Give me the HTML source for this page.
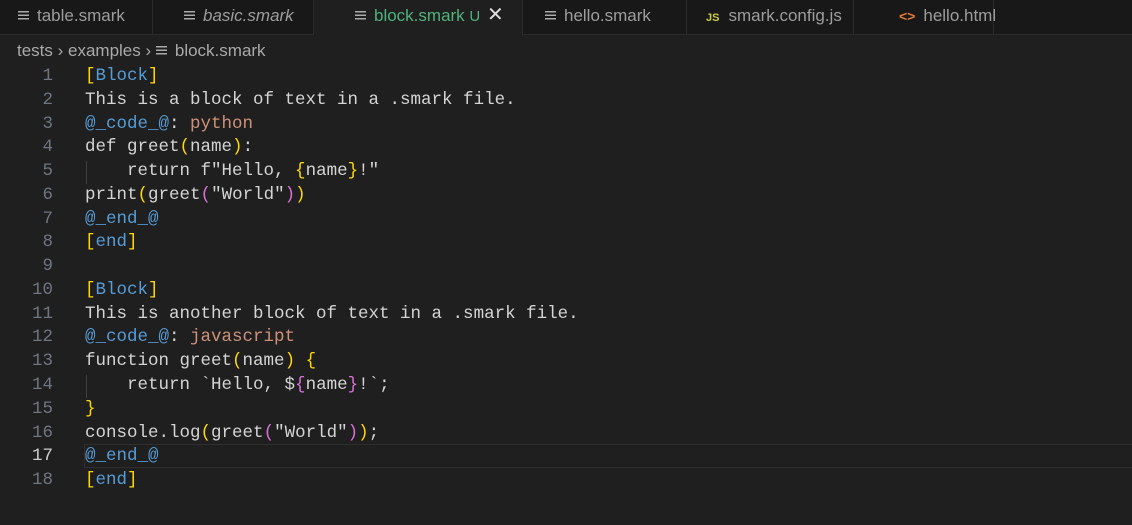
<!DOCTYPE html>
<html style="width:1132px;height:525px;overflow:hidden"><head><style>
*{margin:0;padding:0;box-sizing:border-box}
body{width:1132px;height:525px;background:#1f1f1f;overflow:hidden;font-family:"Liberation Sans",sans-serif;position:relative}
.tabs{position:absolute;left:0;top:0;width:1132px;height:35px;background:#181818;border-bottom:1px solid #2b2b2b}
.tab{position:absolute;top:0;height:35px;border-right:1px solid #2b2b2b;color:#9d9d9d;font-size:17px;line-height:31px;white-space:nowrap}
.tab.active{background:#1f1f1f;height:36px;color:#4fb37a}
.ic{display:inline-block;width:11px;height:10px;margin-right:8px;vertical-align:0px;background:linear-gradient(#aaa 0 1.5px,transparent 1.5px 3.5px,#aaa 3.5px 5px,transparent 5px 7px,#aaa 7px 8.5px,transparent 8.5px);}
.crumb{position:absolute;left:17px;top:40px;color:#a9a9a9;font-size:17px;line-height:22px}
.code{position:absolute;left:0;top:65px;font-family:"Liberation Mono",monospace;font-size:17.5px;line-height:23.77px;color:#d4d4d4;white-space:pre}
.ln{position:absolute;left:0;width:53px;text-align:right;color:#6e7681}
.tx{position:absolute;left:85px}
.b{color:#569cd6}.y{color:#ffd700}.p{color:#da70d6}.o{color:#ce9178}
.guide{position:absolute;left:86px;width:1px;height:23px;background:#404040}
</style></head><body>
<div class="tabs">
<div class="tab" style="left:0;width:153px;padding-left:18px"><span class="ic"></span>table.smark</div>
<div class="tab" style="left:153px;width:161px;padding-left:31px;font-style:italic"><span class="ic"></span>basic.smark</div>
<div class="tab active" style="left:314px;width:209px;padding-left:41px"><span class="ic"></span>block.smark <span style="font-size:15px">U</span> <span style="color:#ddd;font-size:20px;margin-left:2px">✕</span></div>
<div class="tab" style="left:523px;width:164px;padding-left:22px"><span class="ic"></span>hello.smark</div>
<div class="tab" style="left:687px;width:167px;padding-left:19px"><b style="color:#cbcb41;font-size:11px;margin-right:9px">JS</b>smark.config.js</div>
<div class="tab" style="left:854px;width:140px;padding-left:45px"><b style="color:#e37933;font-size:14px;margin-right:8px">&lt;&gt;</b>hello.html</div>
</div>
<div class="crumb">tests › examples › <span class="ic"></span>block.smark</div>
<div style="position:absolute;left:84px;top:444px;width:1048px;height:24px;border:1px solid #2e2e2e;border-right:none"></div>
<div class="code">
<div class="guide" style="top:96px"></div><div class="guide" style="top:310px"></div>
<div class="ln" style="top:0">1</div><div class="tx" style="top:0"><span class="y">[</span><span class="b">Block</span><span class="y">]</span></div>
<div class="ln" style="top:23.77px">2</div><div class="tx" style="top:23.77px">This is a block of text in a .smark file.</div>
<div class="ln" style="top:47.54px">3</div><div class="tx" style="top:47.54px"><span class="b">@_code_@</span>: <span class="o">python</span></div>
<div class="ln" style="top:71.31px">4</div><div class="tx" style="top:71.31px">def greet<span class="y">(</span>name<span class="y">)</span>:</div>
<div class="ln" style="top:95.08px">5</div><div class="tx" style="top:95.08px">    return f"Hello, <span class="y">{</span>name<span class="y">}</span>!"</div>
<div class="ln" style="top:118.85px">6</div><div class="tx" style="top:118.85px">print<span class="y">(</span>greet<span class="p">(</span>"World"<span class="p">)</span><span class="y">)</span></div>
<div class="ln" style="top:142.62px">7</div><div class="tx b" style="top:142.62px">@_end_@</div>
<div class="ln" style="top:166.39px">8</div><div class="tx" style="top:166.39px"><span class="y">[</span><span class="b">end</span><span class="y">]</span></div>
<div class="ln" style="top:190.16px">9</div>
<div class="ln" style="top:213.93px">10</div><div class="tx" style="top:213.93px"><span class="y">[</span><span class="b">Block</span><span class="y">]</span></div>
<div class="ln" style="top:237.7px">11</div><div class="tx" style="top:237.7px">This is another block of text in a .smark file.</div>
<div class="ln" style="top:261.47px">12</div><div class="tx" style="top:261.47px"><span class="b">@_code_@</span>: <span class="o">javascript</span></div>
<div class="ln" style="top:285.24px">13</div><div class="tx" style="top:285.24px">function greet<span class="y">(</span>name<span class="y">)</span> <span class="y">{</span></div>
<div class="ln" style="top:309.01px">14</div><div class="tx" style="top:309.01px">    return `Hello, $<span class="p">{</span>name<span class="p">}</span>!`;</div>
<div class="ln" style="top:332.78px">15</div><div class="tx y" style="top:332.78px">}</div>
<div class="ln" style="top:356.55px">16</div><div class="tx" style="top:356.55px">console.log<span class="y">(</span>greet<span class="p">(</span>"World"<span class="p">)</span><span class="y">)</span>;</div>
<div class="ln" style="top:380.32px;color:#ccc">17</div><div class="tx b" style="top:380.32px">@_end_@</div>
<div class="ln" style="top:404.09px">18</div><div class="tx" style="top:404.09px"><span class="y">[</span><span class="b">end</span><span class="y">]</span></div>
</div>
</body></html>
